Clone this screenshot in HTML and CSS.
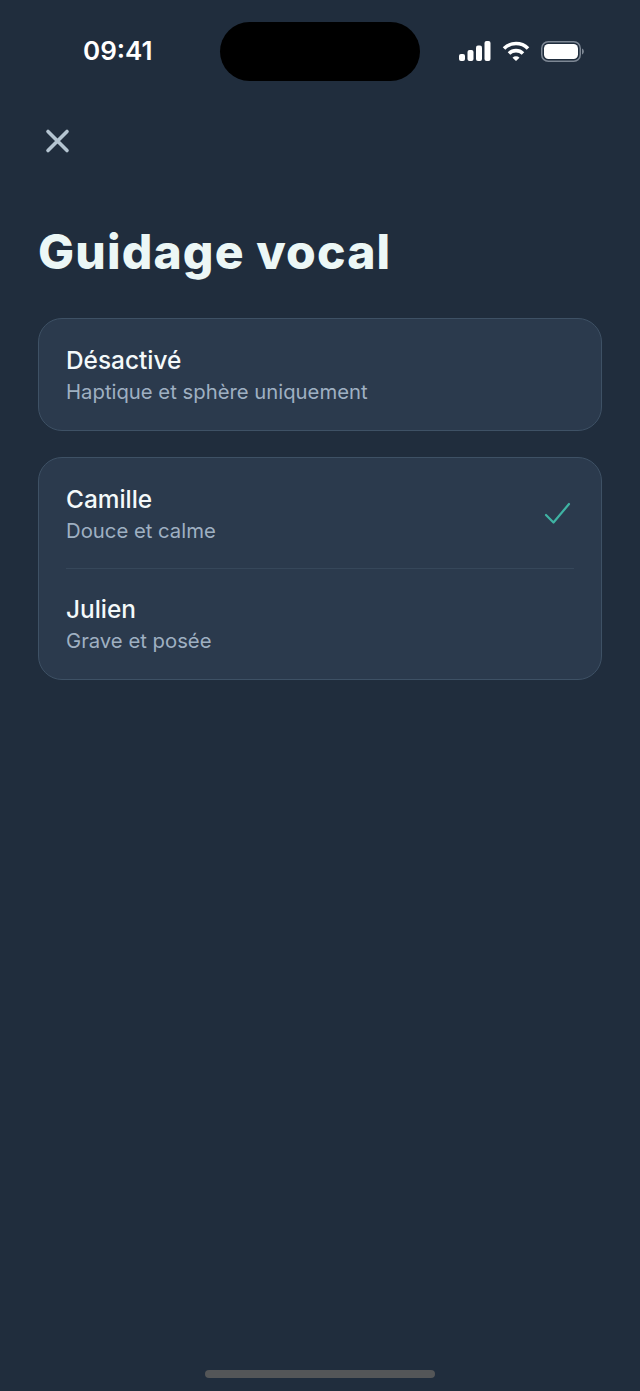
FILE: index.html
```html
<!DOCTYPE html>
<html lang="fr">

<head>
  <meta charset="UTF-8">
  <meta name="viewport" content="width=device-width, initial-scale=1.0">
  <title>Guidage vocal</title>
  <link rel="stylesheet" href="styles.css">
</head>

<body>
  <div class="screen">
    <header class="status-bar">
      <span class="time">09:41</span>
      <div class="status-icons">
        <svg width="32" height="20" viewBox="0 0 32 20" fill="#fff">
          <rect x="0" y="13" width="6" height="7" rx="2" />
          <rect x="8.5" y="9" width="6" height="11" rx="2" />
          <rect x="17" y="4.500" width="6" height="15.500" rx="2" />
          <rect x="25.500" y="0" width="6" height="20" rx="2" />
        </svg>
        <svg width="28" height="21" viewBox="0 0 28 21" fill="none" stroke="#fff" stroke-width="3.600">
          <path d="M2 7.500a17 17 0 0 1 24 0" />
          <path d="M7 12.500a10 10 0 0 1 14 0" />
          <path d="M10.500 16.800 14 20l3.500-3.200a5 5 0 0 0-7 0z" fill="#fff" stroke="none" />
        </svg>
        <svg width="43" height="21" viewBox="0 0 43 21" fill="none">
          <rect x="0.750" y="0.750" width="38.500" height="19.500" rx="6.500" stroke="#7d8794" stroke-width="1.500" />
          <rect x="3" y="3" width="34" height="15" rx="4.500" fill="#fff" />
          <path d="M41 7.500c1.200.4 1.800 1.600 1.800 3s-.6 2.600-1.800 3z" fill="#7d8794" />
        </svg>
      </div>
    </header>
    <div class="island"></div>

    <button class="close-btn" aria-label="Fermer">
      <svg width="26" height="26" viewBox="0 0 26 26" fill="none" stroke="#b4c4d1" stroke-width="3.600" stroke-linecap="round">
        <path d="M4 3.500l19 19M23 3.500l-19 19" />
      </svg>
    </button>

    <h1 class="title">Guidage vocal</h1>

    <section class="card">
      <div class="row">
        <div class="row-text">
          <div class="row-name">Désactivé</div>
          <div class="row-desc">Haptique et sphère uniquement</div>
        </div>
      </div>
    </section>

    <section class="card">
      <div class="row row-divided">
        <div class="row-text">
          <div class="row-name">Camille</div>
          <div class="row-desc">Douce et calme</div>
        </div>
        <svg class="check" width="28" height="24" viewBox="0 0 28 24" fill="none" stroke="#3fb3a3" stroke-width="2.200" stroke-linecap="round" stroke-linejoin="round">
          <path d="M2 13l7.500 7.500L25 2" />
        </svg>
      </div>
      <div class="row row-last">
        <div class="row-text">
          <div class="row-name">Julien</div>
          <div class="row-desc">Grave et posée</div>
        </div>
      </div>
    </section>

    <div class="home-indicator"></div>
  </div>
</body>

</html>
```

FILE: styles.css
```css
html {
  box-sizing: border-box;
}

*,
*::before,
*::after {
  box-sizing: inherit;
}

body {
  margin: 0;
  background-color: #202d3d;
  font-family: "Inter", "Liberation Sans", sans-serif;
}

.screen {
  position: relative;
  display: flex;
  flex-direction: column;
  height: 1391px;
  padding: 0 38px;
  overflow: hidden;
}

.status-bar {
  display: flex;
  align-items: center;
  justify-content: space-between;
  height: 22px;
  margin: 40px 18px 0 45px;
  color: #fff;
}

.time {
  margin-top: -2px;
  font-size: 26px;
  font-weight: 600;
}

.status-icons {
  display: flex;
  align-items: center;
  gap: 11px;
}

.island {
  position: absolute;
  top: 22px;
  left: 220px;
  width: 200px;
  height: 59px;
  border-radius: 30px;
  background-color: #000;
}

.close-btn {
  display: flex;
  align-self: flex-start;
  margin: 66px 0 0 6px;
  padding: 0;
  border: 0;
  background: none;
  cursor: pointer;
}

.title {
  margin: 68px 0 36px;
  color: #ecf7f6;
  font-size: 48px;
  font-weight: 800;
  letter-spacing: 1.150px;
  line-height: 60px;
}

.card {
  margin-bottom: 26px;
  padding: 0 27px;
  border: 1px solid #3e5165;
  border-radius: 24px;
  background-color: #2b3a4d;
}

.row {
  display: flex;
  align-items: center;
  justify-content: space-between;
  height: 111px;
  padding-top: 2px;
}

.row-last {
  height: 110px;
  padding-top: 1px;
}

.row-divided {
  border-bottom: 1px solid #36475a;
}

.row-name {
  color: #f4f9fa;
  font-size: 24.400px;
  font-weight: 500;
  line-height: 30px;
}

.row-desc {
  margin-top: 3px;
  color: #9fb0c2;
  font-size: 20.300px;
  line-height: 28px;
}

.check {
  margin-right: 2px;
}

.home-indicator {
  position: absolute;
  bottom: 13px;
  left: 205px;
  width: 230px;
  height: 8px;
  border-radius: 4px;
  background-color: #545658;
}
```
